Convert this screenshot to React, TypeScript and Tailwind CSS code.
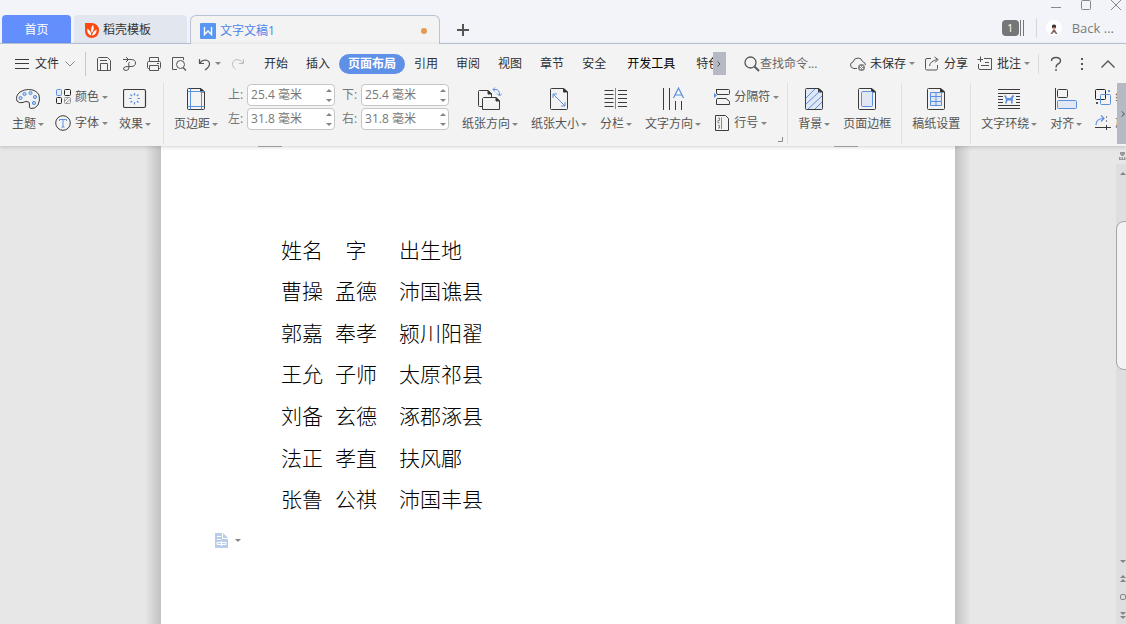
import type { ReactNode } from "react";

const INK = "#3b3b3b";
const BLUE = "#5b8fe0";

const menuTabs = ["开始", "插入", "页面布局", "引用", "审阅", "视图", "章节", "安全", "开发工具", "特色应用"];

const people = [
  ["曹操", "孟德", "沛国谯县"],
  ["郭嘉", "奉孝", "颍川阳翟"],
  ["王允", "子师", "太原祁县"],
  ["刘备", "玄德", "涿郡涿县"],
  ["法正", "孝直", "扶风郿"],
  ["张鲁", "公祺", "沛国丰县"],
];

function Icon({ w, h, children, label }: { w: number; h: number; children: ReactNode; label?: string }) {
  return (
    <svg
      width={w}
      height={h}
      viewBox={`0 0 ${w} ${h}`}
      fill="none"
      stroke={INK}
      className="shrink-0"
      aria-label={label}
      aria-hidden={label ? undefined : true}
    >
      {children}
    </svg>
  );
}

function Caret({ up }: { up?: boolean }) {
  return (
    <svg width="6" height="3" viewBox="0 0 6 3" className="shrink-0" fill="#858585" aria-hidden="true">
      <path d={up ? "M0 3L3 0L6 3z" : "M0 0H6L3 3z"} />
    </svg>
  );
}

function BigButton({ label, icon, menu }: { label: string; icon: ReactNode; menu?: boolean }) {
  return (
    <button type="button" className="flex shrink-0 flex-col items-center gap-[5px] whitespace-nowrap">
      <span className="flex h-6 items-center">{icon}</span>
      <span className="flex items-center gap-[2px] leading-4">
        {label}
        {menu && <Caret />}
      </span>
    </button>
  );
}

function SmallButton({ label, icon, menu }: { label: string; icon: ReactNode; menu?: boolean }) {
  return (
    <button type="button" className="flex shrink-0 items-center gap-1 whitespace-nowrap leading-4">
      <span className="flex w-4 justify-center">{icon}</span>
      <span className="flex items-center gap-[3px]">
        {label}
        {menu && <Caret />}
      </span>
    </button>
  );
}

function MarginField({ id, label, value }: { id: string; label: string; value: string }) {
  return (
    <div className="flex items-center">
      <label htmlFor={id} className="w-[19px]">
        {label}
      </label>
      <div className="flex h-[22px] w-[88px] items-center rounded-sm border border-[#c6c6c6] bg-white pr-[2px] pl-[3px]">
        <input id={id} defaultValue={value} className="min-w-0 flex-1 bg-transparent outline-none" />
        <div className="flex flex-col gap-[7px]">
          <button type="button" aria-label={`${label} +`}>
            <Caret up />
          </button>
          <button type="button" aria-label={`${label} -`}>
            <Caret />
          </button>
        </div>
      </div>
    </div>
  );
}

function PageIcon({ children, fill = "none" }: { children?: ReactNode; fill?: string }) {
  return (
    <Icon w={20} h={24}>
      <path d="M2.5 1.5H15L18.5 5V21.5Q18.5 22.5 17.5 22.5H2.5Q1.5 22.5 1.5 21.5V2.5Q1.5 1.5 2.5 1.5z" fill={fill} />
      <path d="M14.5 1.5V5H18.5z" fill="#222" />
      {children}
    </Icon>
  );
}

function TitleBar() {
  return (
    <header className="flex h-11 items-end border-b border-[#bcc8da] bg-[#f2f4f9] pl-[2px]">
      <nav className="-mb-px flex items-end gap-[3px] text-xs">
        <a href="#home" className="mb-px flex h-7 w-[69px] items-center justify-center rounded-t bg-[#628ffc] pt-[2px] text-white">
          首页
        </a>
        <a href="#templates" className="mb-px flex h-7 w-[113px] items-center gap-1 rounded-t bg-[#e1e6ef] pt-[2px] pl-[11px] text-[#333]">
          <svg width="14" height="15" viewBox="0 0 14 15" aria-hidden="true">
            <path d="M0 0H7Q14 1 14 7.500Q14 14 7 15Q0 14.500 0 8z" fill="#fb4a12" />
            <path d="M6.300 12.500Q1.500 11 2.300 5.500Q6 7.500 6.300 12.500zM6.700 10Q5 5.500 8 2Q10 6 6.700 10zM7 12.700Q7.500 8.500 11.500 6.500Q12 11.500 7 12.700z" fill="#fff" />
          </svg>
          稻壳模板
        </a>
        <a
          href="#document"
          className="flex h-[29px] w-[250px] items-center rounded-t-md border border-b-0 border-[#b8c3d6] bg-[#f3f3f3] pt-[2px] pr-3 pl-[9px] text-[#4a84ea]"
        >
          <svg width="16" height="16" viewBox="0 0 16 16" fill="none" className="mr-1" aria-hidden="true">
            <rect width="16" height="16" rx="1" fill="#5796f3" />
            <path d="M4.500 4V11.500L8 8L11.500 11.500V4" stroke="#fff" strokeWidth="1.400" />
          </svg>
          文字文稿1
          <span className="ml-auto h-1.5 w-1.5 rounded-full bg-[#e69a55]" />
        </a>
      </nav>
      <button type="button" aria-label="新建" className="mb-[7px] ml-[17px]">
        <Icon w={12} h={12}>
          <path d="M6 0V12M0 6H12" stroke="#555" strokeWidth="2" />
        </Icon>
      </button>

      {/* Window controls and account */}
      <div className="ml-auto flex h-full flex-col items-end justify-between">
        <div className="flex gap-5 pr-[5px]">
          <button type="button" aria-label="最小化">
            <Icon w={10} h={11}>
              <path d="M0 7.500H10" stroke="#888" />
            </Icon>
          </button>
          <button type="button" aria-label="最大化">
            <Icon w={10} h={11}>
              <rect x="0.5" y="0.5" width="9" height="9" rx="1" stroke="#888" />
            </Icon>
          </button>
          <button type="button" aria-label="关闭">
            <Icon w={10} h={11}>
              <path d="M0 0L10 10M10 0L0 10" stroke="#888" />
            </Icon>
          </button>
        </div>
        <div className="mb-[5px] flex items-center pr-3">
          <span className="flex h-4 w-[17px] items-center justify-center rounded-sm bg-[#747678] text-[11px] text-white">1</span>
          <span className="ml-px h-4 w-1 border-x border-[#747678]" />
          <span className="mr-[9px] ml-3 h-5 w-px bg-[#d3d6dc]" />
          <svg width="16" height="16" viewBox="0 0 16 16" className="mr-[10px]" aria-hidden="true">
            <circle cx="8" cy="8" r="8" fill="#fff" />
            <path d="M6 7Q5.500 4.500 8 4.500Q10.500 4.500 10 7L9.500 8.500H6.500z" fill="#3d3134" />
            <path d="M7 7.500H9V10H7z" fill="#d9a58c" />
            <path d="M4.500 14L7 10H9L11.500 14H10L8 12L6 14z" fill="#7a6563" />
          </svg>
          <a href="#account" className="text-[13px] leading-5 text-[#7b7b7b]">
            Back ...
          </a>
        </div>
      </div>
    </header>
  );
}

function MenuBar() {
  return (
    <div className="flex h-[39px] items-center pr-[10px] pl-[15px] text-[#2f2f2f]">
      <button type="button" className="flex shrink-0 items-center gap-[6px]">
        <Icon w={14} h={10}>
          <path d="M0 0.500H14M0 4.500H14M0 9.500H14" />
        </Icon>
        文件
        <Icon w={10} h={6}>
          <path d="M0.500 0.500L5 5L9.500 0.500" stroke="#888" />
        </Icon>
      </button>
      <div className="mx-[10px] h-6 w-px shrink-0 bg-[#c9c9c9]" />

      <div className="mr-[9px] flex shrink-0 items-center gap-[9px]">
        <button type="button" aria-label="保存">
          <Icon w={16} h={16}>
            <path d="M2.500 1.500H11.500L14.500 4.500V14.500H1.500V2.500zM4.500 14.500V7.500H11.500V14.500M4 4.500H11" stroke="#555" />
          </Icon>
        </button>
        <button type="button" aria-label="输出">
          <Icon w={16} h={16}>
            <path d="M2 3.500H10Q14.500 3.500 14.500 7Q14.500 10.500 10 10.500H8M5 1L7.500 3.500L5 6M8.500 6Q7 7 8 10.500Q8.500 14.500 5 14.500Q2 14.500 2.500 12Q3 10.500 8 10.500" stroke="#555" />
          </Icon>
        </button>
        <button type="button" aria-label="打印">
          <Icon w={16} h={16}>
            <path d="M3.500 5V1.500H12.500V5M3.500 12.500H2.500Q1.500 12.500 1.500 11.500V6.500Q1.500 5.500 2.500 5.500H13.500Q14.500 5.500 14.500 6.500V11.500Q14.500 12.500 13.500 12.500H12.500M3.500 9.500H12.500V14.500H3.500zM11 7.500H13" stroke="#555" />
          </Icon>
        </button>
        <button type="button" aria-label="打印预览">
          <Icon w={16} h={16}>
            <path d="M6 13.500H1.500V1.500H12.500V4" stroke="#555" />
            <circle cx="9.500" cy="8.500" r="4" stroke="#555" />
            <path d="M12 11.500L15 14.500" stroke="#555" strokeWidth="1.300" />
          </Icon>
        </button>
        <button type="button" aria-label="撤销" className="flex items-center gap-[3px]">
          <Icon w={16} h={16}>
            <path d="M3.500 3V7.500H8M4 7Q6 4 9.500 4Q13.500 4.500 13.500 8Q13.500 11 9 14" stroke="#555" strokeWidth="1.200" />
          </Icon>
          <Caret />
        </button>
        <button type="button" aria-label="恢复">
          <Icon w={16} h={16}>
            <path d="M13.500 3V7.500H9M13 7Q11 3.500 7 3.500Q2.500 4 2.500 8.500Q2.500 11 5.500 13.500" stroke="#bdbdbd" />
          </Icon>
        </button>
      </div>

      <nav className="flex min-w-0 flex-1 overflow-hidden whitespace-nowrap">
        {menuTabs.map((tab) => (
          <button
            key={tab}
            type="button"
            className={
              tab === "页面布局"
                ? "h-5 shrink-0 rounded-full bg-[#5f90e8] px-[9px] font-bold text-white"
                : tab === "开发工具"
                  ? "h-5 shrink-0 px-3 text-black"
                  : "h-5 shrink-0 px-[9px]"
            }
          >
            {tab}
          </button>
        ))}
      </nav>
      <button type="button" aria-label="更多选项卡" className="flex h-[23px] w-[13px] shrink-0 items-center justify-center bg-[#b5b9c3]">
        <Icon w={4} h={6}>
          <path d="M0.500 0.500L3 3L0.500 5.500" stroke="#555" />
        </Icon>
      </button>

      <label className="mr-[26px] ml-[18px] flex shrink-0 items-center">
        <Icon w={16} h={16} label="查找命令">
          <circle cx="6.500" cy="6.500" r="5.500" stroke="#555" strokeWidth="1.300" />
          <path d="M10.500 10.500L15 15" stroke="#555" strokeWidth="1.800" />
        </Icon>
        <input type="text" placeholder="查找命令..." className="w-16 bg-transparent outline-none placeholder:text-[#666]" />
      </label>

      <div className="flex shrink-0 items-center gap-[9px]">
        <SmallButton
          label="未保存"
          menu
          icon={
            <Icon w={16} h={16}>
              <path d="M7 12.500H4Q0.500 12 0.500 9Q0.500 6.500 3 6Q4 2 8 2Q11.500 2 12.500 5.500Q15.500 6.500 15.500 9" stroke="#555" />
              <circle cx="11.500" cy="11.500" r="3.500" fill="#888" stroke="none" />
              <path d="M10 10L13 13M13 10L10 13" stroke="#fff" />
            </Icon>
          }
        />
        <SmallButton
          label="分享"
          icon={
            <Icon w={16} h={16}>
              <path d="M7 2.500H3Q1.500 2.500 1.500 4V12.500Q1.500 14 3 14H12Q13.500 14 13.500 12.500V9M5.500 10Q6 5 13.500 3.500M10.500 1L14 3.500L11 6.500" stroke="#555" />
            </Icon>
          }
        />
        <SmallButton
          label="批注"
          menu
          icon={
            <Icon w={16} h={16}>
              <path d="M7 2.500H14.500V13.500H3Q1.500 13.500 1.500 12V8M3.500 0.500V6M0.500 3.500H6M8 6.500H12M4 9.500H12" stroke="#555" />
            </Icon>
          }
        />
      </div>
      <div className="mr-[9px] ml-2 h-5 w-px shrink-0 bg-[#dcdcdc]" />
      <div className="flex shrink-0 items-center gap-[10px]">
        <button type="button" aria-label="帮助">
          <Icon w={16} h={16}>
            <path d="M3.500 5Q3.500 1.500 8 1.500Q12.500 1.500 12.500 5Q12.500 7 10 8Q8 9 8 11.500M8 13V15" stroke="#555" strokeWidth="1.400" />
          </Icon>
        </button>
        <button type="button" aria-label="更多">
          <Icon w={16} h={16}>
            <path d="M7 2H9V4H7zM7 7H9V9H7zM7 12H9V14H7z" fill="#555" stroke="none" />
          </Icon>
        </button>
        <button type="button" aria-label="收起功能区">
          <Icon w={16} h={16}>
            <path d="M1.500 11.500L8 5L14.500 11.500" stroke="#555" strokeWidth="1.400" />
          </Icon>
        </button>
      </div>
    </div>
  );
}

function Ribbon() {
  return (
    <div className="flex h-[61px] text-[#555]">
      <div className="flex min-w-0 flex-1 overflow-hidden">
        <div className="flex shrink-0 gap-[11px] border-r border-[#e0e0e0] px-3 pt-1">
          <BigButton
            label="主题"
            menu
            icon={
              <Icon w={24} h={24}>
                <path d="M12.500 2.500Q20 2.500 23 8Q24.500 13 22 18Q19 22 15 21.500Q12.500 21 13.500 18Q14 14.500 11 14.500Q8.500 14.500 7 15.500Q3 16.500 1 14Q-1 9 4 5Q8 2.500 12.500 2.500z" />
                <g fill="#b9cff3" stroke={BLUE}>
                  <circle cx="4.500" cy="11" r="1.600" />
                  <circle cx="8.500" cy="7" r="1.600" />
                  <circle cx="14.500" cy="6" r="1.600" />
                  <circle cx="19" cy="10" r="1.600" />
                  <circle cx="18" cy="16" r="1.600" />
                </g>
              </Icon>
            }
          />
          <div className="flex flex-col gap-[10px] pt-[2px]">
            <SmallButton
              label="颜色"
              menu
              icon={
                <Icon w={16} h={16}>
                  <rect x="1.500" y="0.500" width="5" height="6" rx="1" stroke={BLUE} fill="#e3ebf8" />
                  <rect x="9.500" y="0.500" width="6" height="6" rx="1" stroke="#222" />
                  <rect x="1.500" y="8.500" width="5" height="6" rx="1" stroke="#222" />
                  <rect x="9.500" y="8.500" width="6" height="6" rx="1" stroke="#999" />
                  <path d="M9.500 12.500L13 9M10.500 14.500L15 10.500" stroke="#999" />
                </Icon>
              }
            />
            <SmallButton
              label="字体"
              menu
              icon={
                <Icon w={16} h={16}>
                  <circle cx="8" cy="8" r="7.300" />
                  <path d="M4.500 6V4.500H11.500V6M8 4.500V12M6.500 12H9.500" stroke={BLUE} />
                </Icon>
              }
            />
          </div>
          <BigButton
            label="效果"
            menu
            icon={
              <Icon w={24} h={24}>
                <rect x="0.500" y="2.500" width="22" height="18" rx="1.500" strokeWidth="1.200" />
                <path d="M11.500 6V8.500M11.500 15V17.500M6 11.500H8.500M14.500 11.500H17M7.500 7.500L9.200 9.200M15.500 7.500L13.800 9.200M7.500 15.500L9.200 13.800M15.500 15.500L13.800 13.800" stroke={BLUE} strokeWidth="1.200" />
              </Icon>
            }
          />
        </div>

        {/* Page setup */}
        <div className="relative flex shrink-0 gap-[13px] border-r border-[#e0e0e0] pr-2 pl-[10px] pt-1">
          <div className="flex gap-[10px]">
            <BigButton
              label="页边距"
              menu
              icon={
                <PageIcon>
                  <path d="M4.500 1.500V22.500M15.500 4V22.500M1.500 4.500H18.500M1.500 19.500H18.500" stroke={BLUE} />
                </PageIcon>
              }
            />
            <div className="-mt-[3px] grid h-[46px] grid-cols-2 gap-x-[7px] gap-y-[2px] text-[#777]">
              <MarginField id="margin-top" label="上:" value="25.4 毫米" />
              <MarginField id="margin-bottom" label="下:" value="25.4 毫米" />
              <MarginField id="margin-left" label="左:" value="31.8 毫米" />
              <MarginField id="margin-right" label="右:" value="31.8 毫米" />
            </div>
          </div>
          <BigButton
            label="纸张方向"
            menu
            icon={
              <Icon w={24} h={24}>
                <path d="M4.500 19.500H1.500Q0.500 19.500 0.500 18.500V4.500Q0.500 3.500 1.500 3.500H10L13.500 7V10" />
                <path d="M5.500 10.500H18L21.500 14V22.500H4.500V11.500z" />
                <path d="M10 3.500V7H13.500zM18 10.500V14H21.500z" fill="#222" />
                <path d="M15 2.500H18Q21.500 2.500 21.500 8M17 0.500L15 2.500L17 4.500M19 6.500L21.500 9L24 6.500" stroke={BLUE} />
              </Icon>
            }
          />
          <BigButton
            label="纸张大小"
            menu
            icon={
              <PageIcon>
                <path d="M4 7L16 19M4 11V7H8M12 19H16V15" stroke={BLUE} />
              </PageIcon>
            }
          />
          <BigButton
            label="分栏"
            menu
            icon={
              <Icon w={24} h={24}>
                <path d="M0.500 3.500H9.500M0.500 7.500H9.500M0.500 11.500H9.500M0.500 15.500H9.500M0.500 19.500H9.500M14 3.500H23M14 7.500H23M14 11.500H23M14 15.500H23M14 19.500H23" />
                <path d="M11.500 1V22" stroke={BLUE} />
              </Icon>
            }
          />
          <BigButton
            label="文字方向"
            menu
            icon={
              <Icon w={24} h={24}>
                <path d="M2.500 1V23M8.500 1V23M14.500 14V23M20.500 14V23" />
                <path d="M12.500 11L17.500 1L22.500 11M14 8H21" stroke={BLUE} strokeWidth="1.200" />
              </Icon>
            }
          />
          <div className="flex flex-col gap-[10px] pt-[2px]">
            <SmallButton
              label="分隔符"
              menu
              icon={
                <Icon w={16} h={16}>
                  <path d="M2.500 0V4Q2.500 5.500 4 5.500H14.500Q15.500 5.500 15.500 4.500V1.500Q15.500 0.500 14.500 0.500H2.500M2.500 15.500V10.500Q2.500 9.500 4 9.500H12L15.500 12.500V15.500z" />
                  <path d="M0 4L3 6.500L0 9z" fill={BLUE} stroke="none" />
                </Icon>
              }
            />
            <SmallButton
              label="行号"
              menu
              icon={
                <Icon w={14} h={16}>
                  <path d="M0.500 0.500H10.500L13.500 3.500V15.500H0.500z" />
                  <path d="M6.500 2.500V14M3 3H4.500V5.500H3V8H4.500M3 10.500H4.500V13H3" stroke="#888" />
                </Icon>
              }
            />
          </div>
          <button type="button" aria-label="页面设置" className="absolute right-1 bottom-[2px]">
            <Icon w={5} h={5}>
              <path d="M4.500 0V4.500H0" stroke="#888" />
            </Icon>
          </button>
        </div>

        <div className="flex shrink-0 gap-[13px] border-r border-[#e0e0e0] px-[10px] pt-1">
          <BigButton
            label="背景"
            menu
            icon={
              <PageIcon fill="#e1e8f3">
                <path d="M2 11L11 2M2 17L16 4M4 22L18 9M11 22L18 15" stroke={BLUE} />
              </PageIcon>
            }
          />
          <BigButton
            label="页面边框"
            icon={
              <PageIcon>
                <rect x="4.500" y="4.500" width="11" height="15" rx="1" fill="#e1e8f3" stroke={BLUE} />
              </PageIcon>
            }
          />
        </div>

        <div className="flex shrink-0 border-r border-[#e0e0e0] px-[10px] pt-1">
          <BigButton
            label="稿纸设置"
            icon={
              <PageIcon>
                <path d="M4.500 5.500H15.500V18.500H4.500zM10 5.500V18.500M4.500 9.500H15.500M4.500 14.500H15.500" fill="#e1e8f3" stroke={BLUE} />
              </PageIcon>
            }
          />
        </div>

        <div className="flex gap-[13px] pl-[10px] pt-1">
          <BigButton
            label="文字环绕"
            menu
            icon={
              <Icon w={24} h={24}>
                <path d="M1 2.500H23M1 6.500H23M1 9.500H6M19 9.500H23M1 12.500H6M19 12.500H23M1 15.500H6M19 15.500H23M1 18.500H23M1 21.500H23" />
                <path d="M7 8.500H9L10 11H13.500L15.500 8L17.500 9L16 10.500L15.500 16.500H14V13.500H10.500L9.500 16.500H8L9 12.500z" fill={BLUE} stroke="none" />
              </Icon>
            }
          />
          <BigButton
            label="对齐"
            menu
            icon={
              <Icon w={24} h={24}>
                <path d="M1.500 1V23" />
                <rect x="3.500" y="2.500" width="10" height="8" rx="1" />
                <rect x="3.500" y="13.500" width="19" height="8" rx="1" fill="#e1e8f3" stroke={BLUE} />
              </Icon>
            }
          />
          <div className="flex flex-col gap-[10px] pt-[2px]">
            <SmallButton
              label="组合"
              icon={
                <Icon w={16} h={16}>
                  <rect x="0.500" y="0.500" width="10" height="10" rx="1" stroke="#222" />
                  <rect x="5.500" y="5.500" width="10" height="10" rx="1" stroke={BLUE} />
                  <path d="M13 1H15V3H13z" fill={BLUE} stroke="none" />
                  <path d="M1 13H3V15H1z" fill="#555" stroke="none" />
                </Icon>
              }
            />
            <SmallButton
              label="旋转"
              icon={
                <Icon w={16} h={16}>
                  <path d="M1 10Q1 3.500 9 3.500M6 0.500L9 3.500L6 6.500" stroke={BLUE} strokeWidth="1.200" />
                  <path d="M0 12.500H16M11.500 10V15" />
                  <path d="M11.500 1V9" strokeDasharray="2 2" stroke="#888" />
                </Icon>
              }
            />
          </div>
        </div>
      </div>
      <button type="button" aria-label="向右滚动" className="flex w-[9px] shrink-0 items-center justify-end bg-[#b5b9c3]">
        <Icon w={6} h={6}>
          <path d="M1.500 0.500L4.500 3L1.500 5.500" stroke="#555" />
        </Icon>
      </button>
    </div>
  );
}

function DocumentArea() {
  return (
    <main className="flex flex-1 bg-[#e7e7e7]">
      <div className="flex min-w-0 flex-1 justify-center">
        <div className="w-4 shrink-0 bg-linear-to-l from-[#c2c2c2] to-[#e7e7e7]" />
        <article className="w-full max-w-[794px] bg-white">
          {/* Margin corner marks */}
          <div className="flex h-px justify-between px-[97px]">
            <span className="w-6 bg-[#b0b0b0]" />
            <span className="w-6 bg-[#b0b0b0]" />
          </div>
          <div className="pt-[81px] pl-[120px]">
            <table className="h-[291px] font-['Noto_Sans_CJK_SC',sans-serif] text-[21px] leading-6 font-light text-black">
              <tbody>
                <tr>
                  <th scope="col" className="p-0 pr-3 text-left font-light">
                    姓名
                  </th>
                  <th scope="col" className="p-0 pr-[22px] text-center font-light">
                    字
                  </th>
                  <th scope="col" className="p-0 text-left font-light">
                    出生地
                  </th>
                </tr>
                {people.map(([name, courtesy, home]) => (
                  <tr key={name}>
                    <td className="p-0 pr-3">{name}</td>
                    <td className="p-0 pr-[22px]">{courtesy}</td>
                    <td className="p-0">{home}</td>
                  </tr>
                ))}
              </tbody>
            </table>
          </div>
          <button type="button" aria-label="粘贴选项" className="mt-[14px] ml-[54px] flex items-center gap-[7px]">
            <svg width="13" height="15" viewBox="0 0 13 15" fill="none" aria-hidden="true">
              <path d="M0 0H8L13 5V15H0z" fill="#b9cce8" />
              <path d="M7.500 0V5.500H13M2 3.500H6M2 6.500H6M2 9.500H11V11.500H2zM6.500 8V13" stroke="#fff" />
            </svg>
            <Caret />
          </button>
        </article>
        <div className="w-4 shrink-0 bg-linear-to-r from-[#c2c2c2] to-[#e7e7e7]" />
      </div>

      {/* Vertical scroll bar */}
      <div className="flex w-[10px] shrink-0 flex-col overflow-hidden">
        <svg width="10" height="18" viewBox="0 0 10 18" className="shrink-0" fill="#999" aria-hidden="true">
          <path d="M4 6H9V8L7.500 10H5.500L4 8zM3 11H4.500V13H5.500V11H7V13H8V11H9.500V14H3z" />
        </svg>
        <div className="flex flex-1 flex-col bg-[#dedede]">
          <button type="button" aria-label="向上滚动" className="mt-2 ml-1">
            <Caret up />
          </button>
          <div className="mt-[46px] h-[149px] w-5 shrink-0 rounded-lg border border-[#a6a6a6] bg-[#f3f3f3]" />
          <div className="mt-auto mb-[5px] flex flex-col items-start gap-3 pl-1">
            <button type="button" aria-label="向下滚动">
              <Caret />
            </button>
            <button type="button" aria-label="上一页" className="flex flex-col gap-px">
              <Caret up />
              <Caret up />
            </button>
            <button type="button" aria-label="选择浏览对象" className="h-[6px] w-[6px] rounded-xs border border-[#888]" />
            <button type="button" aria-label="下一页" className="flex flex-col gap-px">
              <Caret />
              <Caret />
            </button>
          </div>
        </div>
      </div>
    </main>
  );
}

export default function App() {
  return (
    <div className="flex min-h-screen flex-col font-['Open_Sans','Noto_Sans_CJK_SC',sans-serif] text-xs">
      <TitleBar />
      <div className="relative bg-[#f3f3f3] pb-[2px] shadow-[0_1px_4px_rgba(0,0,0,0.18)]">
        <MenuBar />
        <Ribbon />
      </div>
      <DocumentArea />
    </div>
  );
}
